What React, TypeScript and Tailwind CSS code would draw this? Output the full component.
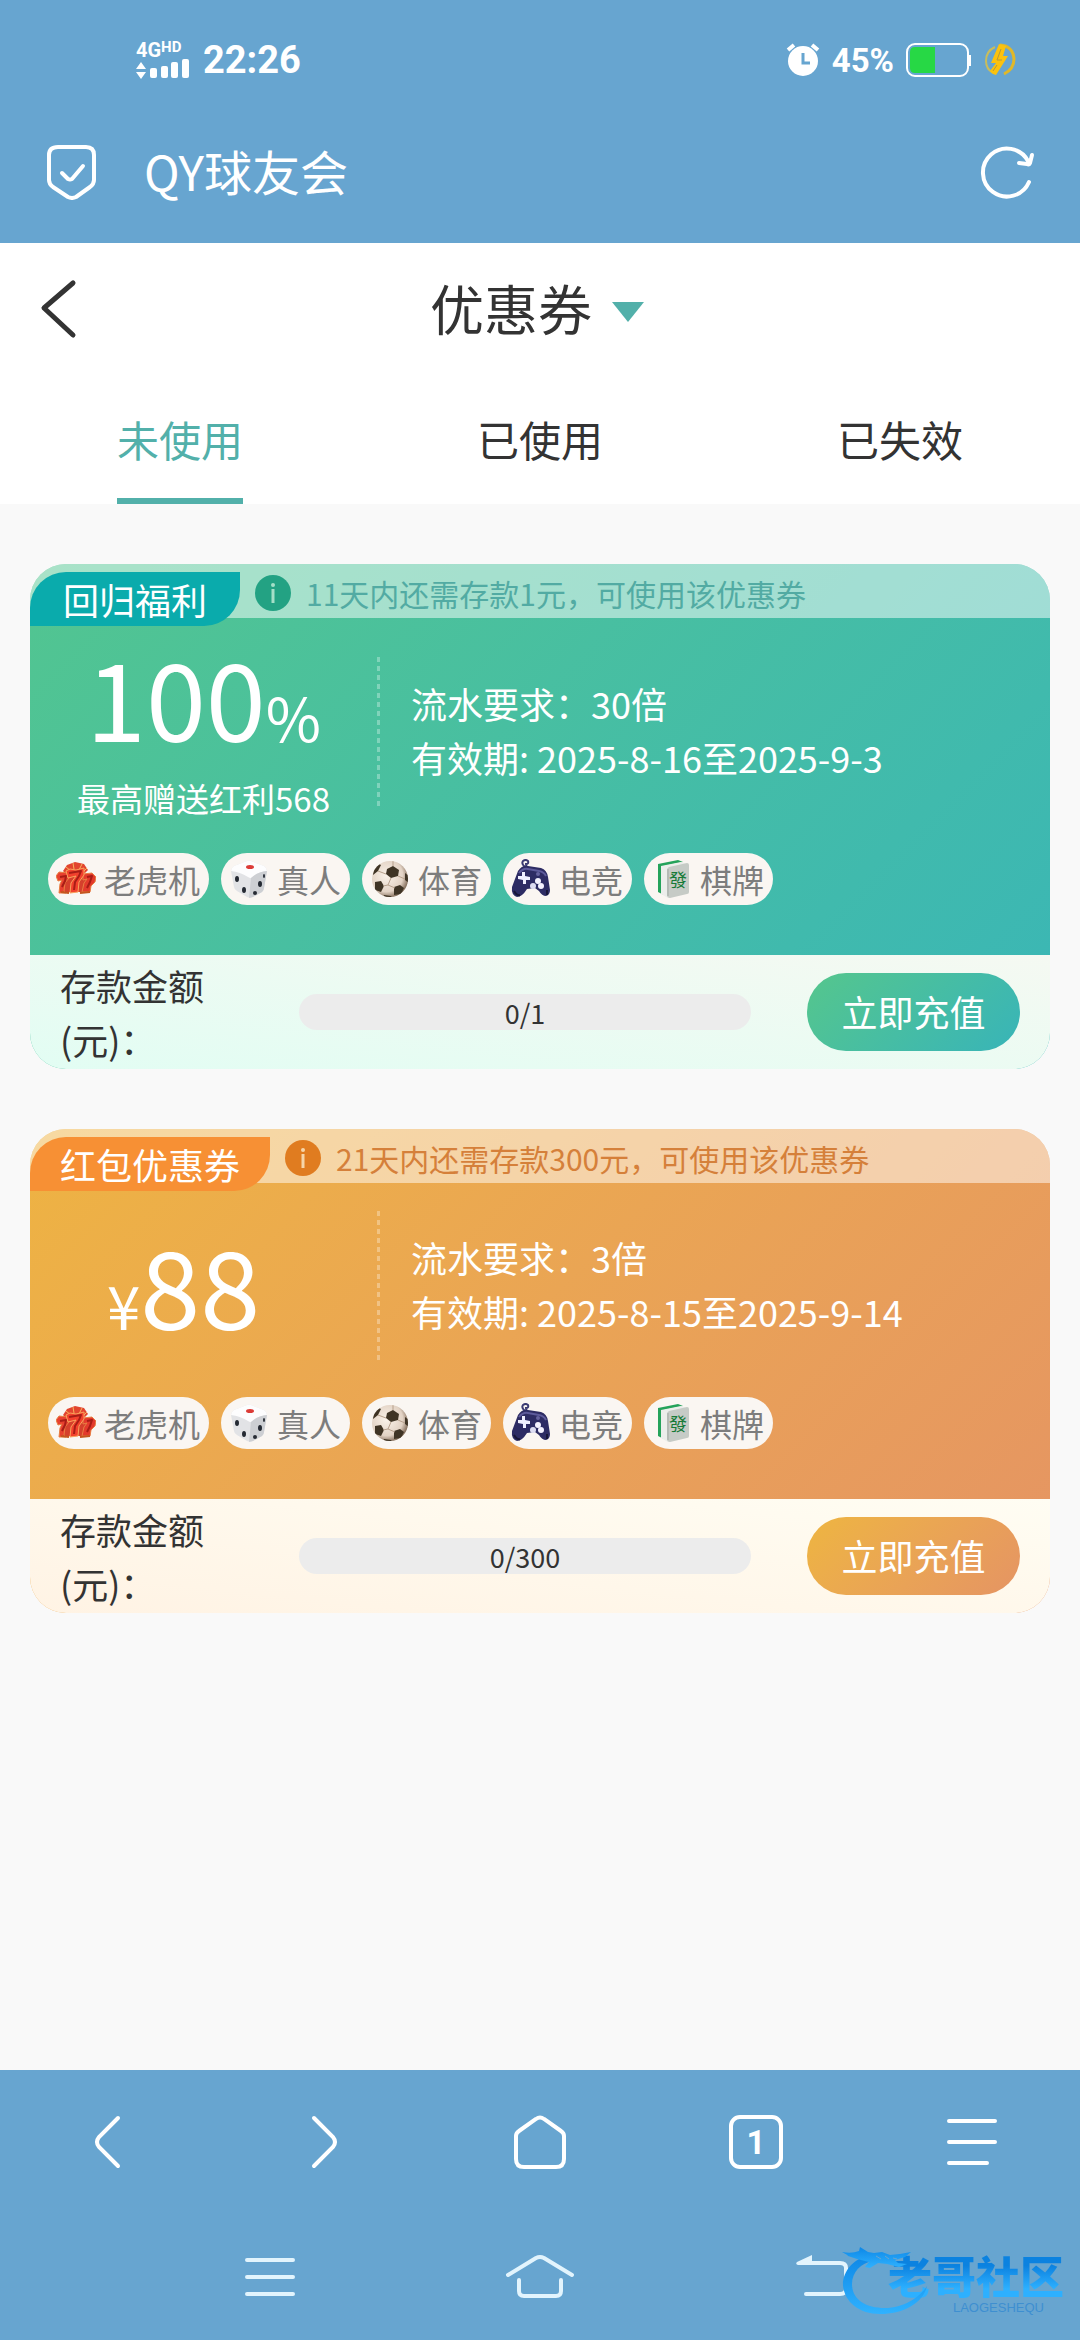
import type { ReactNode } from "react";

type Theme = {
  card: string;
  tag: string;
  badge: string;
  notice: string;
  footer: string;
  button: string;
};

type Coupon = {
  id: string;
  name: string;
  notice: string;
  prefix?: string;
  amount: string;
  suffix?: string;
  note?: string;
  turnover: string;
  period: string;
  deposited: number;
  target: number;
  theme: Theme;
};

const green: Theme = {
  card: "bg-linear-135 from-[#52c590] to-[#3ab6b6]",
  tag: "bg-[#0aabac]",
  badge: "bg-[#23a283] text-[#a5dfc8]",
  notice: "text-[#52aba3]",
  footer: "bg-linear-to-tr from-[#e2fdf3] to-[#f5f9f2]",
  button: "bg-linear-135 from-[#55c68c] to-[#38b4b8]",
};

const orange: Theme = {
  card: "bg-linear-135 from-[#eeb342] to-[#e59463]",
  tag: "bg-[#f79034]",
  badge: "bg-[#e07c20] text-[#f6d5a8]",
  notice: "text-[#d5803a]",
  footer: "bg-linear-to-tr from-[#fff3e4] to-[#fffdf3]",
  button: "bg-linear-135 from-[#eeb540] to-[#e59463]",
};

const coupons: Coupon[] = [
  {
    id: "return",
    name: "回归福利",
    notice: "11天内还需存款1元，可使用该优惠券",
    amount: "100",
    suffix: "%",
    note: "最高赠送红利568",
    turnover: "流水要求：30倍",
    period: "有效期: 2025-8-16至2025-9-3",
    deposited: 0,
    target: 1,
    theme: green,
  },
  {
    id: "red-packet",
    name: "红包优惠券",
    notice: "21天内还需存款300元，可使用该优惠券",
    prefix: "¥",
    amount: "88",
    turnover: "流水要求：3倍",
    period: "有效期: 2025-8-15至2025-9-14",
    deposited: 0,
    target: 300,
    theme: orange,
  },
];

function SlotsIcon() {
  return (
    <svg viewBox="0 0 40 40" className="h-10 w-10" strokeLinejoin="round" aria-hidden="true">
      <path d="M7 12l4-6 8-3 9 2 4 6-4 4H10z" fill="#e2452f" />
      <path d="M10 8l5 4M17 4l1 6M26 5l-3 6M31 9l-4 4" stroke="#f6b35c" />
      <path d="M4 15h32l-2 18H7z" fill="#d5402c" />
      <path d="M0 17l3-4 9 1 1 5-4 5-1 8 2 2H3l1-9 2-4-4 1z" fill="#e8402f" stroke="#e87f42" />
      <path d="M27 15l9-1 4 4-1 5-4 4-1 6h-8l2-9 3-4-4 1z" fill="#e33a2c" stroke="#e87f42" />
      <path d="M10 12l4-2 6 1 8-2v7l-5 7-1 10-8 1 1-10 5-7-8 2z" fill="#f2412d" stroke="#f9a35c" />
      <path d="M13 14l6-1 6-1-2 5-4 6-1 8" fill="none" stroke="#a81d16" strokeWidth="2" />
      <path d="M4 18l6-1-1 5-3 6M31 18l5-1-2 6-3 6" fill="none" stroke="#a81d16" strokeWidth="2" />
      <path d="M5 33l8 1M24 34l10-1" stroke="#c4561f" strokeWidth="2" />
    </svg>
  );
}

function DiceIcon() {
  return (
    <svg viewBox="0 0 40 40" className="h-10 w-10" aria-hidden="true">
      <path d="M2 12q0-3 3-5l13-5q2-1 4 0l13 5q3 2 3 5l-3 17q0 2-2 4l-9 5q-3 1-6 0L8 32q-3-2-3-4z" fill="#e2e3e6" />
      <path d="M2 12q0-3 3-5l13-5q2-1 4 0l13 5q3 2 3 5-9 1-14 6-2 2-5 0Q11 13 2 12z" fill="#fdfdfe" />
      <path d="M22 19q6-6 16-7l-3 17q0 2-2 4l-9 5-4 1z" fill="#cdcfd3" />
      <ellipse cx="21" cy="8" rx="4" ry="2" fill="#dc3b37" />
      <ellipse cx="8" cy="20" rx="2" ry="3" fill="#252a33" />
      <ellipse cx="15" cy="31" rx="2" ry="3" fill="#252a33" />
      <ellipse cx="35" cy="17" rx="1" ry="2" fill="#252a33" />
      <ellipse cx="31" cy="25" rx="2" ry="3" fill="#252a33" />
      <ellipse cx="26" cy="34" rx="2" ry="2" fill="#252a33" />
    </svg>
  );
}

function BallIcon() {
  return (
    <svg viewBox="0 0 40 40" className="h-10 w-10" aria-hidden="true">
      <defs>
        <radialGradient id="ball" cx="0.4" cy="0.4" r="0.65">
          <stop offset="0" stopColor="#fbf3ea" />
          <stop offset="0.7" stopColor="#e2d2c4" />
          <stop offset="1" stopColor="#77604d" />
        </radialGradient>
        <clipPath id="ballEdge">
          <circle cx="20" cy="20" r="18" />
        </clipPath>
      </defs>
      <circle cx="20" cy="20" r="18" fill="url(#ball)" />
      <g clipPath="url(#ballEdge)" fill="#3f3425">
        <path d="M17 10l6-3 6 4-1 6-7 2-5-4z" />
        <path d="M5 23l6-1 3 5-3 6-6-2z" />
        <path d="M24 28l6-2 4 3-3 6-7 1z" />
        <path d="M35 14l4 3v7l-4-3z" />
        <path d="M4 9l5-4 2 1-3 6-5 4z" />
        <path d="M14 36l7 1 2 3H13z" />
        <path d="M21 19l-3 7 7 3M18 26l-5 1M16 15l-8-3M28 17l7 3M23 7V2" fill="none" stroke="#b6a08c" />
      </g>
    </svg>
  );
}

function GamepadIcon() {
  return (
    <svg viewBox="0 0 40 40" className="h-10 w-10" aria-hidden="true">
      <path d="M14 8q-4-3-2-6 3-2 5 0 1 3-2 3 0 2 1 3" fill="none" stroke="#3a3a72" strokeWidth="2" />
      <path d="M7 12Q11 6 17 7l13 2q6 2 7 9l2 13q0 5-4 6-4 0-7-5l-4-3-8 1q-5 8-10 8-6-2-5-10z" fill="#2d2c64" />
      <path d="M8 14q4-5 9-4l11 2q5 1 7 5" fill="none" stroke="#5d5b9b" strokeWidth="2" />
      <path d="M11 13h3v4l5 1v3h-4v4h-3v-4l-5-1v-3h4z" fill="#eff0ff" />
      <circle cx="27" cy="22" r="3" fill="#f4f2ff" />
      <circle cx="22" cy="27" r="3" fill="#dcdcf2" />
      <circle cx="30" cy="27" r="3" fill="#f4f2ff" />
      <circle cx="27" cy="15" r="2" fill="#65629f" />
      <path d="M3 32q3 5 6 4M36 31v5" fill="none" stroke="#171638" strokeWidth="2" />
    </svg>
  );
}

function MahjongIcon() {
  return (
    <svg viewBox="0 0 40 40" className="h-10 w-10" aria-hidden="true">
      <path d="M6 5l20-4 5 2-19 4v29l-6-3z" fill="#25a35b" />
      <path d="M9 7l20-4 6 2-18 4-1 30-7-4z" fill="#eceeeb" />
      <path d="M17 8l18-4q2 0 2 2v27q0 2-2 2l-17 4q-3 0-3-3V11q0-2 2-3z" fill="#c6cbc6" />
      <path d="M16 10v27" stroke="#a3aaa4" />
      <text x="26" y="28" textAnchor="middle" fontSize="18" fill="#177a38" fontFamily="Noto Sans CJK TC, sans-serif">
        發
      </text>
    </svg>
  );
}

const games: { label: string; icon: ReactNode }[] = [
  { label: "老虎机", icon: <SlotsIcon /> },
  { label: "真人", icon: <DiceIcon /> },
  { label: "体育", icon: <BallIcon /> },
  { label: "电竞", icon: <GamepadIcon /> },
  { label: "棋牌", icon: <MahjongIcon /> },
];

function StatusBar() {
  return (
    <div className="flex h-[100px] items-center justify-between pt-5 pr-[64px] pl-[136px] font-[Roboto,sans-serif] font-bold">
      <div className="flex items-center gap-[14px]">
        <div className="flex flex-col">
          <div className="flex items-start leading-none">
            <span className="text-[20px] leading-[18px]">4G</span>
            <span className="text-[15px] leading-3">HD</span>
          </div>
          <svg viewBox="0 0 53 21" className="h-[21px] w-[53px]" fill="currentColor" aria-hidden="true">
            <path d="M5 3l5 7H0zM0 13h10l-5 7z" />
            <rect x="14" y="9" width="7" height="10" rx="2" />
            <rect x="25" y="7" width="7" height="12" rx="2" />
            <rect x="35" y="3" width="7" height="16" rx="2" />
            <rect x="46" y="0" width="7" height="19" rx="2" />
          </svg>
        </div>
        <span className="text-[38px] leading-none">22:26</span>
      </div>
      <div className="flex items-center gap-3">
        <svg viewBox="0 0 34 34" className="h-[34px] w-[34px]" aria-hidden="true">
          <circle cx="17" cy="18" r="15" fill="#fff" />
          <path d="M2 7l6-5M32 7l-6-5" stroke="#fff" strokeWidth="4" />
          <path d="M17 10v10h7" fill="none" stroke="#67a5d0" strokeWidth="3" />
        </svg>
        <span className="text-[33px] leading-none">45%</span>
        <svg viewBox="0 0 66 34" className="h-[34px] w-[66px]" aria-hidden="true">
          <rect x="1" y="1" width="61" height="32" rx="8" fill="none" stroke="#fff" strokeWidth="2" />
          <path d="M9 4h20v26H9q-5 0-5-5V9q0-5 5-5z" fill="#27d845" />
          <path d="M64 12v11" stroke="#fff" strokeWidth="2" />
        </svg>
        <svg viewBox="0 0 32 34" className="h-[34px] w-8" aria-hidden="true">
          <path d="M11 4Q2 8 2 18q0 8 7 12" fill="none" stroke="#c8bd5c" strokeWidth="2" />
          <path d="M16 2q13 1 14 14 0 10-10 15" fill="none" stroke="#e0b829" strokeWidth="3" />
          <path d="M15 1l7 2-3 10h5L12 32q-4-1-6-4l6-8H7z" fill="#fbc20e" />
          <path d="M13 22l-4 6M17 6l-4 11h5" fill="none" stroke="#b59a3a" />
        </svg>
      </div>
    </div>
  );
}

function CouponCard({ coupon }: { coupon: Coupon }) {
  const { theme } = coupon;
  return (
    <article className={`overflow-hidden rounded-[36px] ${theme.card}`}>
      <header className="flex h-[54px] bg-white/50 pt-2">
        <h2 className={`flex h-[54px] min-w-[210px] shrink-0 items-center justify-center rounded-tl-[36px] rounded-br-[36px] px-[30px] text-[36px] leading-none text-white ${theme.tag}`}>
          {coupon.name}
        </h2>
        <div className="-mt-1 ml-[15px] flex h-[50px] items-center gap-[15px]">
          <span className={`flex h-9 w-9 items-center justify-center rounded-full ${theme.badge}`}>
            <svg viewBox="0 0 36 36" className="h-9 w-9" aria-hidden="true">
              <circle cx="18" cy="10" r="2" fill="currentColor" />
              <path d="M18 14v14" stroke="currentColor" strokeWidth="3" />
            </svg>
          </span>
          <p className={`text-[30px] leading-[50px] ${theme.notice}`}>{coupon.notice}</p>
        </div>
      </header>

      <div className="pb-[50px]">
        <div className="flex items-center pt-7 pb-[30px] text-white">
          <div className="flex w-[347px] flex-col items-center">
            <div className={`flex h-[104px] items-baseline text-[108px] leading-[98px] ${coupon.prefix ? "pr-10" : ""}`}>
              {coupon.prefix && <span className="text-[60px] leading-none">{coupon.prefix}</span>}
              <span>{coupon.amount}</span>
              {coupon.suffix && <span className="text-[60px] leading-none">{coupon.suffix}</span>}
            </div>
            {coupon.note && <p className="mt-[29px] text-[33px] leading-[38px]">{coupon.note}</p>}
          </div>
          <div className="h-[150px] w-[3px] bg-[repeating-linear-gradient(to_bottom,rgba(255,255,255,0.3)_0px,rgba(255,255,255,0.3)_5px,transparent_5px,transparent_9px)]" />
          <div className="ml-[31px] pb-1 text-[36px] leading-[54px]">
            <p>{coupon.turnover}</p>
            <p>{coupon.period}</p>
          </div>
        </div>
        <ul className="mt-[6px] flex flex-wrap gap-3 px-[18px]">
          {games.map((game) => (
            <li key={game.label} className="flex h-[52px] items-center gap-2 rounded-full bg-[#faf6f2] pr-[9px] pl-2 text-[32px] leading-none text-[#7d7d7d]">
              {game.icon}
              {game.label}
            </li>
          ))}
        </ul>
      </div>

      <footer className={`flex h-[114px] items-center px-[30px] ${theme.footer}`}>
        <span id={`${coupon.id}-label`} className="w-[239px] shrink-0 text-[36px] leading-[54px] text-[#333]">
          存款金额
          <br />
          (元)：
        </span>
        <div
          role="progressbar"
          aria-labelledby={`${coupon.id}-label`}
          aria-valuenow={coupon.deposited}
          aria-valuemin={0}
          aria-valuemax={coupon.target}
          className="mr-14 flex h-9 flex-1 items-center justify-center rounded-full bg-[#ececec] text-[27px] leading-none text-[#333]"
        >
          {coupon.deposited}/{coupon.target}
        </div>
        <button type="button" className={`h-[78px] w-[213px] shrink-0 rounded-full pb-0.5 text-[36px] text-white ${theme.button}`}>
          立即充值
        </button>
      </footer>
    </article>
  );
}

function Watermark() {
  return (
    <div className="pointer-events-none absolute right-4 bottom-6 flex h-[72px] w-[224px] justify-end">
      <svg viewBox="0 0 92 72" className="absolute top-0 left-0 h-[72px] w-[92px]" aria-hidden="true">
        <defs>
          <linearGradient id="dragon" x1="0" y1="0" x2="0" y2="1">
            <stop offset="0" stopColor="#0d87e6" />
            <stop offset="1" stopColor="#2fb2ff" />
          </linearGradient>
        </defs>
        <g fill="url(#dragon)">
          <path d="M35 11C12 12 2 30 3 42c2 16 16 28 37 28 22 0 43-10 47-28-8 12-24 22-42 22-20 0-33-9-33-24 0-12 9-21 21-23z" />
          <path d="M2 8q10 2 17-1l1-4 8 5 6 1 8-1 8 3 10-1 11-2-6 5-10 3 3 3 9 1-8 3-12-3-9-1-8 5-5-1 4-5-12-3-9-3Q8 11 2 8z" />
        </g>
        <path d="M36 12l5 3M45 12l4 3M53 14l4 1" stroke="#67a5d0" strokeWidth="1" />
      </svg>
      <div className="flex flex-col items-end pt-2">
        <span className="bg-linear-to-b from-[#0b82e0] from-30% to-[#2db0ff] to-80% bg-clip-text text-[44px] leading-[46px] font-black text-transparent">
          老哥社区
        </span>
        <span className="mt-1 pr-5 font-['Liberation_Sans',sans-serif] text-[13px] leading-3 text-[#3e8fd0]">LAOGESHEQU</span>
      </div>
    </div>
  );
}

const tabs = ["未使用", "已使用", "已失效"];

export default function App() {
  return (
    <div className="flex min-h-screen flex-col bg-[#f9f9f9] font-['Noto_Sans_CJK_SC',sans-serif] text-[#333]">
      <div className="bg-[#67a5d0] text-white">
        <StatusBar />
        <div className="flex h-[143px] items-center px-[46px]">
          <svg viewBox="0 0 52 56" className="h-14 w-[52px]" fill="none" stroke="currentColor" strokeWidth="4" strokeLinecap="round" strokeLinejoin="round" aria-hidden="true">
            <path d="M12 3h28q8 0 8 8v25q0 4-4 7L30 53q-4 2-8 0L7 43q-4-3-4-7V11q0-8 9-8z" />
            <path d="M16 29l6 6q2 1 4 0l11-13" />
          </svg>
          <span className="ml-[46px] flex-1 pb-1 text-[48px] leading-none">QY球友会</span>
          <button type="button" aria-label="刷新" className="-mr-0.5 flex items-center">
            <svg viewBox="0 0 56 56" className="h-14 w-14" fill="none" stroke="currentColor" strokeWidth="4" strokeLinecap="round" strokeLinejoin="round">
              <path d="M49 38A24 24 0 1 1 48 17" />
              <path d="M52 11l-2 8q-1 2-3 1l-8-1" />
            </svg>
          </button>
        </div>
      </div>

      <div className="bg-white">
        <div className="grid h-[132px] grid-cols-[120px_1fr_126px] items-center">
          <button type="button" aria-label="返回" className="pl-9">
            <svg viewBox="0 0 44 60" className="h-[60px] w-11" fill="none" stroke="currentColor" strokeWidth="5" strokeLinecap="round" strokeLinejoin="round">
              <path d="M37 4L8 29l29 27" />
            </svg>
          </button>
          <button type="button" className="flex items-center justify-center gap-5 pb-0.5 text-[54px] leading-none">
            优惠券
            <svg viewBox="0 0 32 20" className="mt-2 h-5 w-8" aria-hidden="true">
              <path d="M0 0h32L16 20z" fill="#52b0aa" />
            </svg>
          </button>
        </div>
        <div role="tablist" className="grid h-[129px] grid-cols-3">
          {tabs.map((tab, i) => (
            <button
              key={tab}
              type="button"
              role="tab"
              aria-selected={i === 0}
              className={`justify-self-center border-y-6 border-t-transparent pb-0.5 text-[42px] leading-none ${
                i === 0 ? "border-b-[#52b0aa] text-[#52b0aa]" : "border-b-transparent"
              }`}
            >
              {tab}
            </button>
          ))}
        </div>
      </div>

      <main className="flex flex-1 flex-col gap-[60px] px-[30px] py-[60px]">
        {coupons.map((coupon) => (
          <CouponCard key={coupon.id} coupon={coupon} />
        ))}
      </main>

      <div className="relative bg-[#67a5d0] text-white">
        <nav className="grid h-36 grid-cols-5 items-center justify-items-center">
          <button type="button" aria-label="后退">
            <svg viewBox="0 0 56 56" className="h-14 w-14" fill="none" stroke="currentColor" strokeWidth="4" strokeLinecap="round">
              <path d="M38 4L19 23q-4 5 0 10l19 19" />
            </svg>
          </button>
          <button type="button" aria-label="前进">
            <svg viewBox="0 0 56 56" className="h-14 w-14" fill="none" stroke="currentColor" strokeWidth="4" strokeLinecap="round">
              <path d="M18 4l19 19q4 5 0 10L18 52" />
            </svg>
          </button>
          <button type="button" aria-label="主页">
            <svg viewBox="0 0 56 56" className="h-14 w-14" fill="none" stroke="currentColor" strokeWidth="4">
              <path d="M4 22q0-3 3-5L24 5q4-3 8 0l17 12q3 2 3 5v23q0 8-8 8H12q-8 0-8-8z" />
            </svg>
          </button>
          <button type="button" aria-label="标签页" className="flex h-[54px] w-[54px] items-center justify-center rounded-[11px] border-4 border-white font-[Roboto,sans-serif] text-[33px] leading-none font-bold">
            1
          </button>
          <button type="button" aria-label="菜单">
            <svg viewBox="0 0 56 56" className="h-14 w-14" fill="none" stroke="currentColor" strokeWidth="4" strokeLinecap="round">
              <path d="M5 7h46M5 28h46M5 49h38" />
            </svg>
          </button>
        </nav>
        <nav className="grid h-[126px] grid-cols-3 items-center justify-items-center px-[135px] text-[#e2f4fd]">
          <button type="button" aria-label="最近任务">
            <svg viewBox="0 0 76 48" className="h-12 w-[76px]" fill="none" stroke="currentColor" strokeWidth="4" strokeLinecap="round">
              <path d="M15 7h46M15 24h46M15 41h46" />
            </svg>
          </button>
          <button type="button" aria-label="桌面">
            <svg viewBox="0 0 76 48" className="h-12 w-[76px]" fill="none" stroke="currentColor" strokeWidth="4" strokeLinecap="round" strokeLinejoin="round">
              <path d="M6 22L34 5q4-2 8 0l28 17" />
              <path d="M17 27v11q0 5 5 5h32q5 0 5-5V27" />
            </svg>
          </button>
          <button type="button" aria-label="系统返回">
            <svg viewBox="0 0 76 48" className="h-12 w-[76px]" fill="none" stroke="currentColor" strokeWidth="4" strokeLinecap="round">
              <path d="M30 10h38q6 0 6 5v21q0 5-6 5H34" />
              <path d="M40 2v10H26q-3-1-1-3z" fill="currentColor" stroke="none" />
            </svg>
          </button>
        </nav>
        <Watermark />
      </div>
    </div>
  );
}
